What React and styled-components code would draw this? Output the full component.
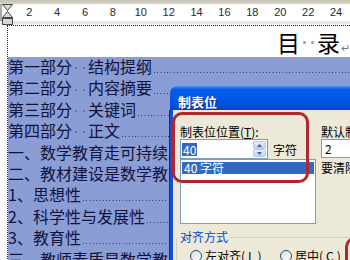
import React from 'react';
import styled, { createGlobalStyle } from 'styled-components';

const CJK = `"Noto Sans CJK SC", "Noto Sans", sans-serif`;

const Global = createGlobalStyle`
  html, body { margin: 0; padding: 0; background: #fff; }
  #root { width: 350px; height: 260px; }
`;

const Screen = styled.div`
  position: relative;
  width: 350px;
  height: 260px;
  overflow: hidden;
  background: #fff;
  font-family: ${CJK};
`;

/* ---------- ruler ---------- */
const Ruler = styled.div`
  position: relative;
  height: 24px;
  display: flex;
  flex-direction: column;
  background: #ece9d8;
`;
const RulerTop = styled.div`
  height: 4px;
  background: linear-gradient(#c4c0b4, #d9d5c9);
`;
const RulerBand = styled.div`
  height: 17px;
  display: flex;
  background: #fff;
`;
const RulerMargin = styled.div`
  width: 8px;
  background: #a8a8a8;
`;
const RulerScale = styled.div`
  display: flex;
  padding-left: 13.5px;
`;
const RulerNum = styled.span`
  flex: 0 0 27.9px;
  text-align: center;
  font: 11px/17px "Liberation Sans", Arial, sans-serif;
  color: #2a2a2a;
`;
const IndentMarker = styled.svg`
  position: absolute;
  left: 2px;
  top: 4px;
`;

/* ---------- document ---------- */
const Page = styled.div`
  margin: 1px 0 0 7px;
  border-top: 1px dotted #222;
  border-left: 1px dotted #222;
  display: flex;
  flex-direction: column;
`;
const TitleRow = styled.div`
  height: 31px;
  box-sizing: border-box;
  padding: 2px 0 0 269px;
  display: flex;
  align-items: center;
  font-size: 23px;
  line-height: 29px;
  color: #000;
  white-space: nowrap;
`;
const TitleSpace = styled.span`
  display: inline-flex;
  width: 11.5px;
  justify-content: center;
  align-items: center;
  &::after {
    content: '';
    width: 3px;
    height: 3px;
    border-radius: 50%;
    background: #9a9a9a;
  }
`;
const ReturnMark = styled.span`
  font-size: 11px;
  color: #777;
  margin-left: 1px;
  align-self: flex-end;
  line-height: 20px;
`;

const Selection = styled.div`
  background: #8b9dd5;
  color: #10123a;
  font-size: 16px;
`;
const Line = styled.div`
  display: flex;
  box-sizing: border-box;
  height: 21.4px;
  padding-top: 1px;
  line-height: 16px;
  white-space: nowrap;
`;
const Words = styled.span`
  flex: none;
`;
const SpaceMark = styled.span`
  flex: none;
  display: inline-flex;
  width: 8px;
  justify-content: center;
  align-items: center;
  &::after {
    content: '';
    width: 2px;
    height: 2px;
    border-radius: 50%;
    background: #5f6b9f;
  }
`;
const Leader = styled.span`
  flex: 1 0 30px;
  margin-left: 2px;
  background: linear-gradient(to right, #262a55 1px, transparent 1px) 0 14px / 3.3px 1px repeat-x;
`;

/* ---------- dialog ---------- */
const Dialog = styled.div`
  position: absolute;
  left: 170px;
  top: 86px;
  width: 200px;
  height: 180px;
  display: flex;
  flex-direction: column;
  font-family: ${CJK};
  font-size: 12px;
  color: #000;
`;
const TitleBar = styled.div`
  height: 24px;
  box-sizing: border-box;
  padding: 8px 0 0 8px;
  border-radius: 7px 7px 0 0;
  background: linear-gradient(#4a8ff7 0%, #0b5ce9 14%, #0057e6 55%, #0047d3 100%);
  color: #fff;
  font-weight: bold;
  font-size: 13px;
  line-height: 16px;
  text-shadow: 1px 1px 0 #0b2a8a;
`;
const Body = styled.div`
  flex: 1;
  background: #ece9d8;
  border-left: 3px solid #1750d8;
  box-shadow: -1px 0 0 #0a2d9e;
  padding: 14px 0 0 7px;
  display: grid;
  grid-template-columns: 141px 1fr;
  align-content: start;
`;
const Column = styled.div`
  display: flex;
  flex-direction: column;
  white-space: nowrap;
`;
const Label = styled.div`
  height: 15px;
  line-height: 15px;
  margin-top: ${p => p.$gap || 0}px;
`;
const Key = styled.span`
  text-decoration: underline;
`;
const InputRow = styled.div`
  display: flex;
  align-items: center;
  height: 20px;
`;
const TextBox = styled.div`
  width: ${p => p.$w}px;
  height: ${p => p.$h}px;
  box-sizing: border-box;
  border: 1px solid #7f9db9;
  background: #fff;
  display: flex;
  align-items: center;
  padding: 0 1px 0 ${p => p.$pad || 1}px;
  line-height: 14px;
`;
const Selected = styled.span`
  background: #316ac5;
  color: #fff;
  padding: 0 1px;
  line-height: 13px;
`;
const Spin = styled.div`
  margin-left: auto;
  width: 13px;
  height: 16px;
  display: flex;
  flex-direction: column;
`;
const SpinBtn = styled.div`
  flex: 1;
  display: flex;
  align-items: center;
  justify-content: center;
  background: linear-gradient(#e6edfd, #bfcff5);
  border: 1px solid #b7c8ef;
  border-radius: 2px;
`;
const Unit = styled.span`
  margin-left: 5px;
`;
const ListBox = styled.div`
  width: 136px;
  height: 65px;
  box-sizing: border-box;
  border: 1px solid #7f9db9;
  background: #fff;
  padding: 2px 1px;
`;
const ListItem = styled.div`
  height: 12px;
  line-height: 12px;
  padding-left: 2px;
  background: #316ac5;
  color: #fff;
`;
const Group = styled.fieldset`
  grid-column: 1 / -1;
  margin: 7px 0 0 -4px;
  padding: 6px 0 0 13px;
  border: 1px solid #d0d0bf;
  border-radius: 3px;
  min-width: 0;
`;
const GroupTitle = styled.legend`
  color: #0046d5;
  padding: 0 2px;
  margin-left: -12px;
  line-height: 12px;
`;
const RadioRow = styled.div`
  display: grid;
  grid-template-columns: 90px auto;
  white-space: nowrap;
`;
const Radio = styled.div`
  display: flex;
  align-items: center;
  gap: 3px;
  line-height: 13px;
`;
const RadioDot = styled.span`
  width: 12px;
  height: 12px;
  box-sizing: border-box;
  border: 1px solid #1c5180;
  border-radius: 50%;
  background: linear-gradient(135deg, #dcdcd4, #fff);
`;

const Annotation = styled.div`
  position: absolute;
  left: ${p => p.$x}px;
  top: ${p => p.$y}px;
  width: ${p => p.$w}px;
  height: ${p => p.$h}px;
  box-sizing: border-box;
  border: 3px solid #b1272b;
  border-radius: 10px;
`;

const Arrow = ({ up }) => (
  <svg width="5" height="3" viewBox="0 0 5 3">
    <path d={up ? 'M0 3 L2.5 0 L5 3 Z' : 'M0 0 L2.5 3 L5 0 Z'} fill="#4d6185" />
  </svg>
);

const toc = [
  ['第一部分', '结构提纲'],
  ['第二部分', '内容摘要'],
  ['第三部分', '关键词'],
  ['第四部分', '正文'],
  ['一、数学教育走可持续发展道路'],
  ['二、教材建设是数学教育改革的关键'],
  ['1、思想性'],
  ['2、科学性与发展性'],
  ['3、教育性'],
  ['三、教师素质是数学教育的保证'],
];

const rulerNums = [2, 4, 6, 8, 10, 12, 14, 16, 18, 20, 22, 24];

export default function App() {
  return (
    <Screen>
      <Global />
      <Ruler>
        <RulerTop />
        <RulerBand>
          <RulerMargin />
          <RulerScale>
            {rulerNums.map(n => (
              <RulerNum key={n}>{n}</RulerNum>
            ))}
          </RulerScale>
        </RulerBand>
        <IndentMarker width="11" height="21" viewBox="0 0 11 21">
          <path d="M0.5 0.5 H10.5 L5.5 6.5 Z" fill="#d8d8d8" stroke="#444" />
          <path d="M5.5 7.5 L10.5 13.5 H0.5 Z" fill="#d8d8d8" stroke="#444" />
          <rect x="0.5" y="14.5" width="10" height="6" fill="#d8d8d8" stroke="#444" />
        </IndentMarker>
      </Ruler>

      <Page>
        <TitleRow>
          <span>目</span>
          <TitleSpace />
          <TitleSpace />
          <span>录</span>
          <ReturnMark>↵</ReturnMark>
        </TitleRow>
        <Selection>
          {toc.map((row, i) => (
            <Line key={i}>
              <Words>{row[0]}</Words>
              {row[1] && (
                <>
                  <SpaceMark />
                  <SpaceMark />
                  <Words>{row[1]}</Words>
                </>
              )}
              <Leader />
            </Line>
          ))}
        </Selection>
      </Page>

      <Dialog>
        <TitleBar>制表位</TitleBar>
        <Body>
          <Column>
            <Label>制表位位置(<Key>T</Key>):</Label>
            <InputRow>
              <TextBox $w={88} $h={20} $pad={1}>
                <Selected>40</Selected>
                <Spin>
                  <SpinBtn><Arrow up /></SpinBtn>
                  <SpinBtn><Arrow /></SpinBtn>
                </Spin>
              </TextBox>
              <Unit>字符</Unit>
            </InputRow>
            <ListBox>
              <ListItem>40 字符</ListItem>
            </ListBox>
          </Column>
          <Column>
            <Label>默认制表位(<Key>F</Key>):</Label>
            <TextBox $w={60} $h={19} $pad={3}>2</TextBox>
            <Label $gap={2}>要清除的制表位:</Label>
          </Column>
          <Group>
            <GroupTitle>对齐方式</GroupTitle>
            <RadioRow>
              <Radio><RadioDot />左对齐(<Key>L</Key>)</Radio>
              <Radio><RadioDot />居中(<Key>C</Key>)</Radio>
            </RadioRow>
          </Group>
        </Body>
      </Dialog>

      <Annotation $x={172} $y={112} $w={137} $h={71} />
      <Annotation $x={345} $y={237} $w={40} $h={40} />
    </Screen>
  );
}
